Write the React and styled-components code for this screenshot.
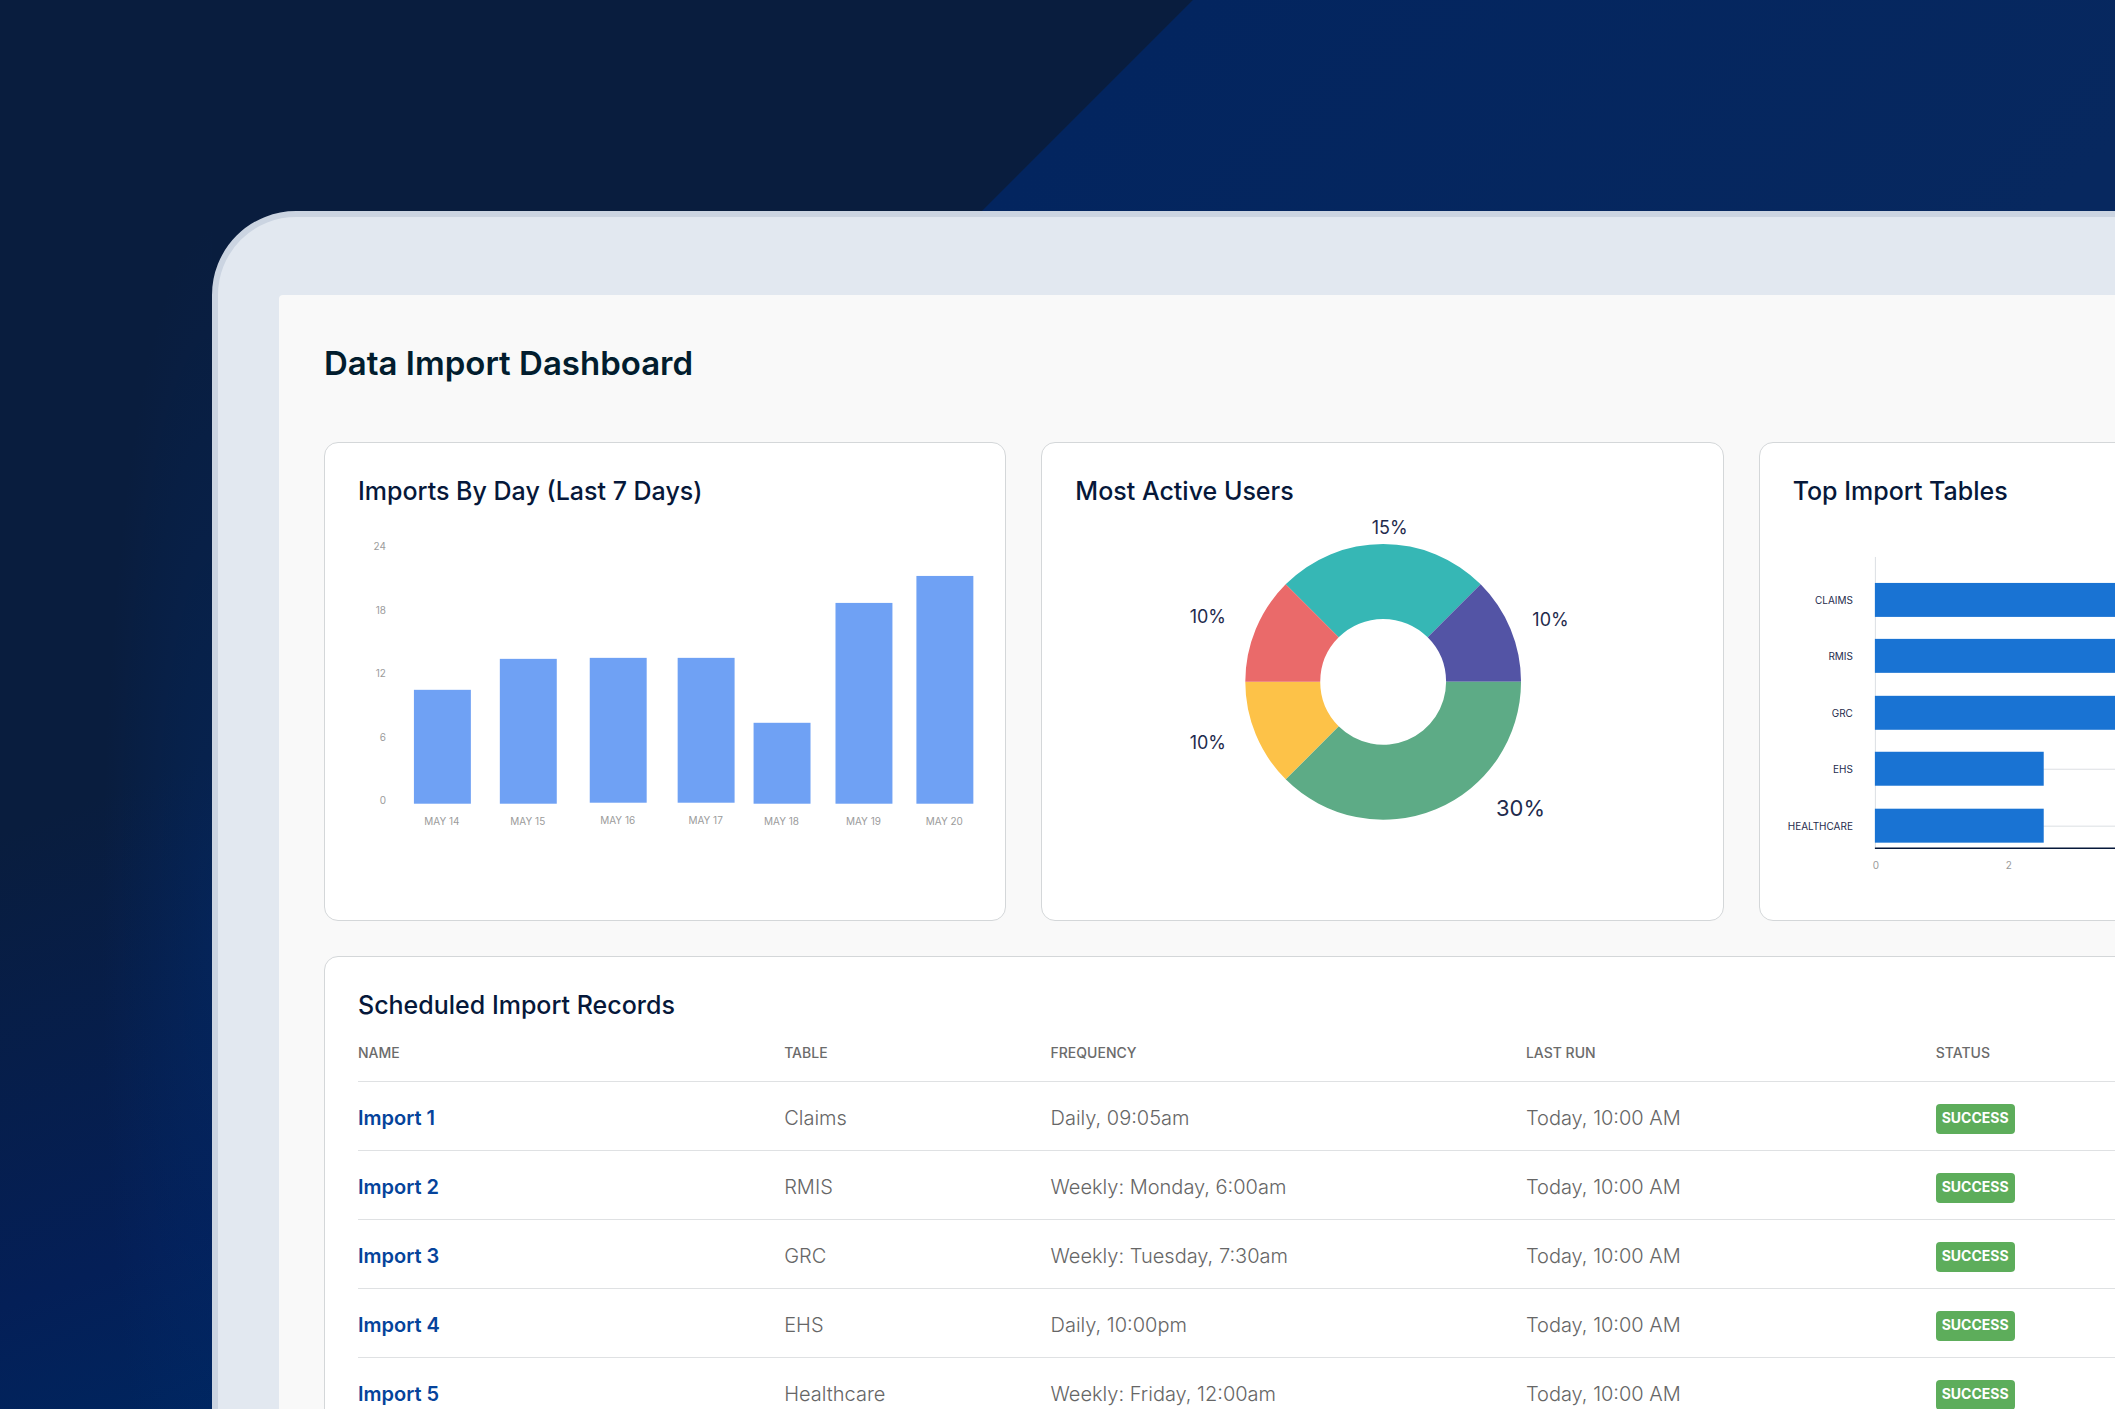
import React from "react";
import styled, { createGlobalStyle } from "styled-components";

const sans = `"Inter", "Liberation Sans", sans-serif`;

const GlobalStyle = createGlobalStyle`
  *, *::before, *::after { box-sizing: border-box; }
  body { margin: 0; font-family: ${sans}; }
`;

const Page = styled.main`
  height: 100vh;
  overflow: hidden;
  padding: 211px 0 0 212px;
  background:
    linear-gradient(135deg, transparent 843px, #03255f 844px, #07285f 1600px) 0 0 / 100% 240px no-repeat,
    radial-gradient(ellipse 110px 50% at 212px 66%, rgba(0, 48, 120, 0.35), transparent) 0 0 / 212px 100% no-repeat,
    linear-gradient(160deg, #091d3e 56%, #041f57 88%, #00255e) 0 0 / 212px 100% no-repeat,
    #091d3e;
`;

const Device = styled.div`
  margin-right: -440px;
  padding: 78px 61px 60px;
  border: 6px solid #cbd4e1;
  border-radius: 84px;
  background: #e2e8f0;
`;

const Screen = styled.div`
  display: flex;
  flex-direction: column;
  gap: 35px;
  padding: 48px 47px 48px 45px;
  border-radius: 4px;
  background: #f9f9f9;
`;

const PageTitle = styled.h1`
  margin: 0 0 24px;
  color: #021d2e;
  font-size: 33px;
  font-weight: 600;
  line-height: 40px;
`;

const Cards = styled.div`
  display: grid;
  grid-template-columns: repeat(3, 1fr);
  gap: 35px;
`;

const Card = styled.section`
  padding-bottom: 33px;
  border: 1px solid #d4d7d9;
  border-radius: 14px;
  background: #fff;
`;

const CardTitle = styled.h2`
  margin: 0;
  padding: 32px 33px 0;
  color: #06183a;
  font-size: 25px;
  font-weight: 500;
  line-height: 32px;
`;

const Chart = styled.svg`
  display: block;
  width: 100%;
  height: auto;
  padding-top: 10px;
  font-family: ${sans};
`;

const AxisText = styled.text`
  fill: ${(p) => p.$fill || "#9b9b9b"};
  font-size: 10px;
  dominant-baseline: central;
`;

const ShareText = styled.text`
  fill: #1f2b4d;
  font-size: ${(p) => (p.$large ? 22 : 18)}px;
  text-anchor: middle;
  dominant-baseline: central;
`;

const TableWrap = styled.div`
  padding: 0 33px;
`;

const Table = styled.table`
  width: 100%;
  border-collapse: collapse;
  table-layout: fixed;
  text-align: left;
`;

const Col = styled.col`
  width: ${(p) => p.$share}%;
`;

const HeadCell = styled.th`
  height: 61px;
  padding: 4px 0 0;
  border-bottom: 1px solid #dfe1e3;
  color: #6b6b6b;
  font-size: 14px;
  font-weight: 500;
`;

const Cell = styled.td`
  height: 69px;
  padding: 4px 0 0;
  border-bottom: 1px solid #dfe1e3;
  color: #666;
  font-size: 20px;
  font-weight: 300;
`;

const StatusCell = styled(Cell)`
  padding-top: 6px;
`;

const ImportLink = styled.a`
  color: #05439b;
  font-weight: 600;
  text-decoration: none;
`;

const Badge = styled.span`
  display: inline-flex;
  align-items: center;
  height: 30px;
  padding: 0 6px 4px;
  border-radius: 4px;
  background: #5dad5b;
  color: #fff;
  font-size: 14px;
  font-weight: 700;
  vertical-align: middle;
`;

const days = [
  { label: "MAY 14", x: 89, top: 173, base: 287 },
  { label: "MAY 15", x: 175, top: 142, base: 287 },
  { label: "MAY 16", x: 265, top: 141, base: 286 },
  { label: "MAY 17", x: 353, top: 141, base: 286 },
  { label: "MAY 18", x: 429, top: 206, base: 287 },
  { label: "MAY 19", x: 511, top: 86, base: 287 },
  { label: "MAY 20", x: 592, top: 59, base: 287 },
];

const dayTicks = [
  { value: 24, y: 29 },
  { value: 18, y: 93 },
  { value: 12, y: 156 },
  { value: 6, y: 220 },
  { value: 0, y: 283 },
];

function ImportsByDay() {
  return (
    <Chart viewBox="0 0 681 370" role="img" aria-label="Imports by day">
      {dayTicks.map((t) => (
        <AxisText key={t.value} x="61" y={t.y} textAnchor="end">{t.value}</AxisText>
      ))}
      {days.map((d) => (
        <g key={d.label}>
          <rect x={d.x} y={d.top} width="57" height={d.base - d.top} fill="#6fa1f4" />
          <AxisText x={d.x + 28} y={d.base + 17} textAnchor="middle">{d.label}</AxisText>
        </g>
      ))}
    </Chart>
  );
}

const slices = [
  { from: 225, to: 315, color: "#36b7b5" },
  { from: 315, to: 360, color: "#5354a5" },
  { from: 0, to: 135, color: "#5dab86" },
  { from: 135, to: 180, color: "#fdc248" },
  { from: 180, to: 225, color: "#ea6a6a" },
];

const shares = [
  { label: "15%", x: 348, y: 10 },
  { label: "10%", x: 509, y: 103 },
  { label: "30%", x: 479, y: 291, large: true },
  { label: "10%", x: 166, y: 226 },
  { label: "10%", x: 166, y: 100 },
];

function ringPath({ from, to }) {
  const point = (deg, r) => {
    const a = (deg * Math.PI) / 180;
    return `${341.5 + r * Math.cos(a)} ${165 + r * Math.sin(a)}`;
  };
  return `M${point(from, 138)} A138 138 0 0 1 ${point(to, 138)} L${point(to, 63)} A63 63 0 0 0 ${point(from, 63)} Z`;
}

function ActiveUsers() {
  return (
    <Chart viewBox="0 0 681 370" role="img" aria-label="Most active users">
      {slices.map((s) => (
        <path key={s.from} d={ringPath(s)} fill={s.color} />
      ))}
      {shares.map((s) => (
        <ShareText key={`${s.x}-${s.y}`} x={s.x} y={s.y} $large={s.large}>{s.label}</ShareText>
      ))}
    </Chart>
  );
}

const tables = [
  { label: "CLAIMS", y: 83, width: 532 },
  { label: "RMIS", y: 139, width: 480 },
  { label: "GRC", y: 196, width: 400 },
  { label: "EHS", y: 252, width: 169 },
  { label: "HEALTHCARE", y: 309, width: 169 },
];

function TopTables() {
  return (
    <Chart viewBox="0 0 681 370" role="img" aria-label="Top import tables">
      <path d="M115.5 40V331" stroke="#dcdfe3" />
      {tables.map((t) => (
        <g key={t.label}>
          <path d={`M116 ${t.y + 0.5}H648`} stroke="#dcdfe3" />
          <rect x="115" y={t.y - 17} width={t.width} height="34" fill="#1973d3" />
          <AxisText x="93" y={t.y} textAnchor="end" $fill="#1f2b4d">{t.label}</AxisText>
        </g>
      ))}
      <path d="M115 331.5H648" stroke="#06183a" strokeWidth="1.5" />
      <AxisText x="116" y="348" textAnchor="middle">0</AxisText>
      <AxisText x="249" y="348" textAnchor="middle">2</AxisText>
    </Chart>
  );
}

const columns = [
  { label: "NAME", share: 20.8 },
  { label: "TABLE", share: 13 },
  { label: "FREQUENCY", share: 23.2 },
  { label: "LAST RUN", share: 20 },
  { label: "STATUS", share: 23 },
];

const records = [
  { name: "Import 1", table: "Claims", frequency: "Daily, 09:05am" },
  { name: "Import 2", table: "RMIS", frequency: "Weekly: Monday, 6:00am" },
  { name: "Import 3", table: "GRC", frequency: "Weekly: Tuesday, 7:30am" },
  { name: "Import 4", table: "EHS", frequency: "Daily, 10:00pm" },
  { name: "Import 5", table: "Healthcare", frequency: "Weekly: Friday, 12:00am" },
];

function ImportRecords() {
  return (
    <TableWrap>
      <Table>
        <colgroup>
          {columns.map((c) => <Col key={c.label} $share={c.share} />)}
        </colgroup>
        <thead>
          <tr>
            {columns.map((c) => <HeadCell key={c.label} scope="col">{c.label}</HeadCell>)}
          </tr>
        </thead>
        <tbody>
          {records.map((r) => (
            <tr key={r.name}>
              <Cell><ImportLink href="#">{r.name}</ImportLink></Cell>
              <Cell>{r.table}</Cell>
              <Cell>{r.frequency}</Cell>
              <Cell>Today, 10:00 AM</Cell>
              <StatusCell><Badge>SUCCESS</Badge></StatusCell>
            </tr>
          ))}
        </tbody>
      </Table>
    </TableWrap>
  );
}

export default function App() {
  return (
    <>
      <GlobalStyle />
      <Page>
        <Device>
          <Screen>
            <PageTitle>Data Import Dashboard</PageTitle>
            <Cards>
              <Card>
                <CardTitle>Imports By Day (Last 7 Days)</CardTitle>
                <ImportsByDay />
              </Card>
              <Card>
                <CardTitle>Most Active Users</CardTitle>
                <ActiveUsers />
              </Card>
              <Card>
                <CardTitle>Top Import Tables</CardTitle>
                <TopTables />
              </Card>
            </Cards>
            <Card>
              <CardTitle>Scheduled Import Records</CardTitle>
              <ImportRecords />
            </Card>
          </Screen>
        </Device>
      </Page>
    </>
  );
}
